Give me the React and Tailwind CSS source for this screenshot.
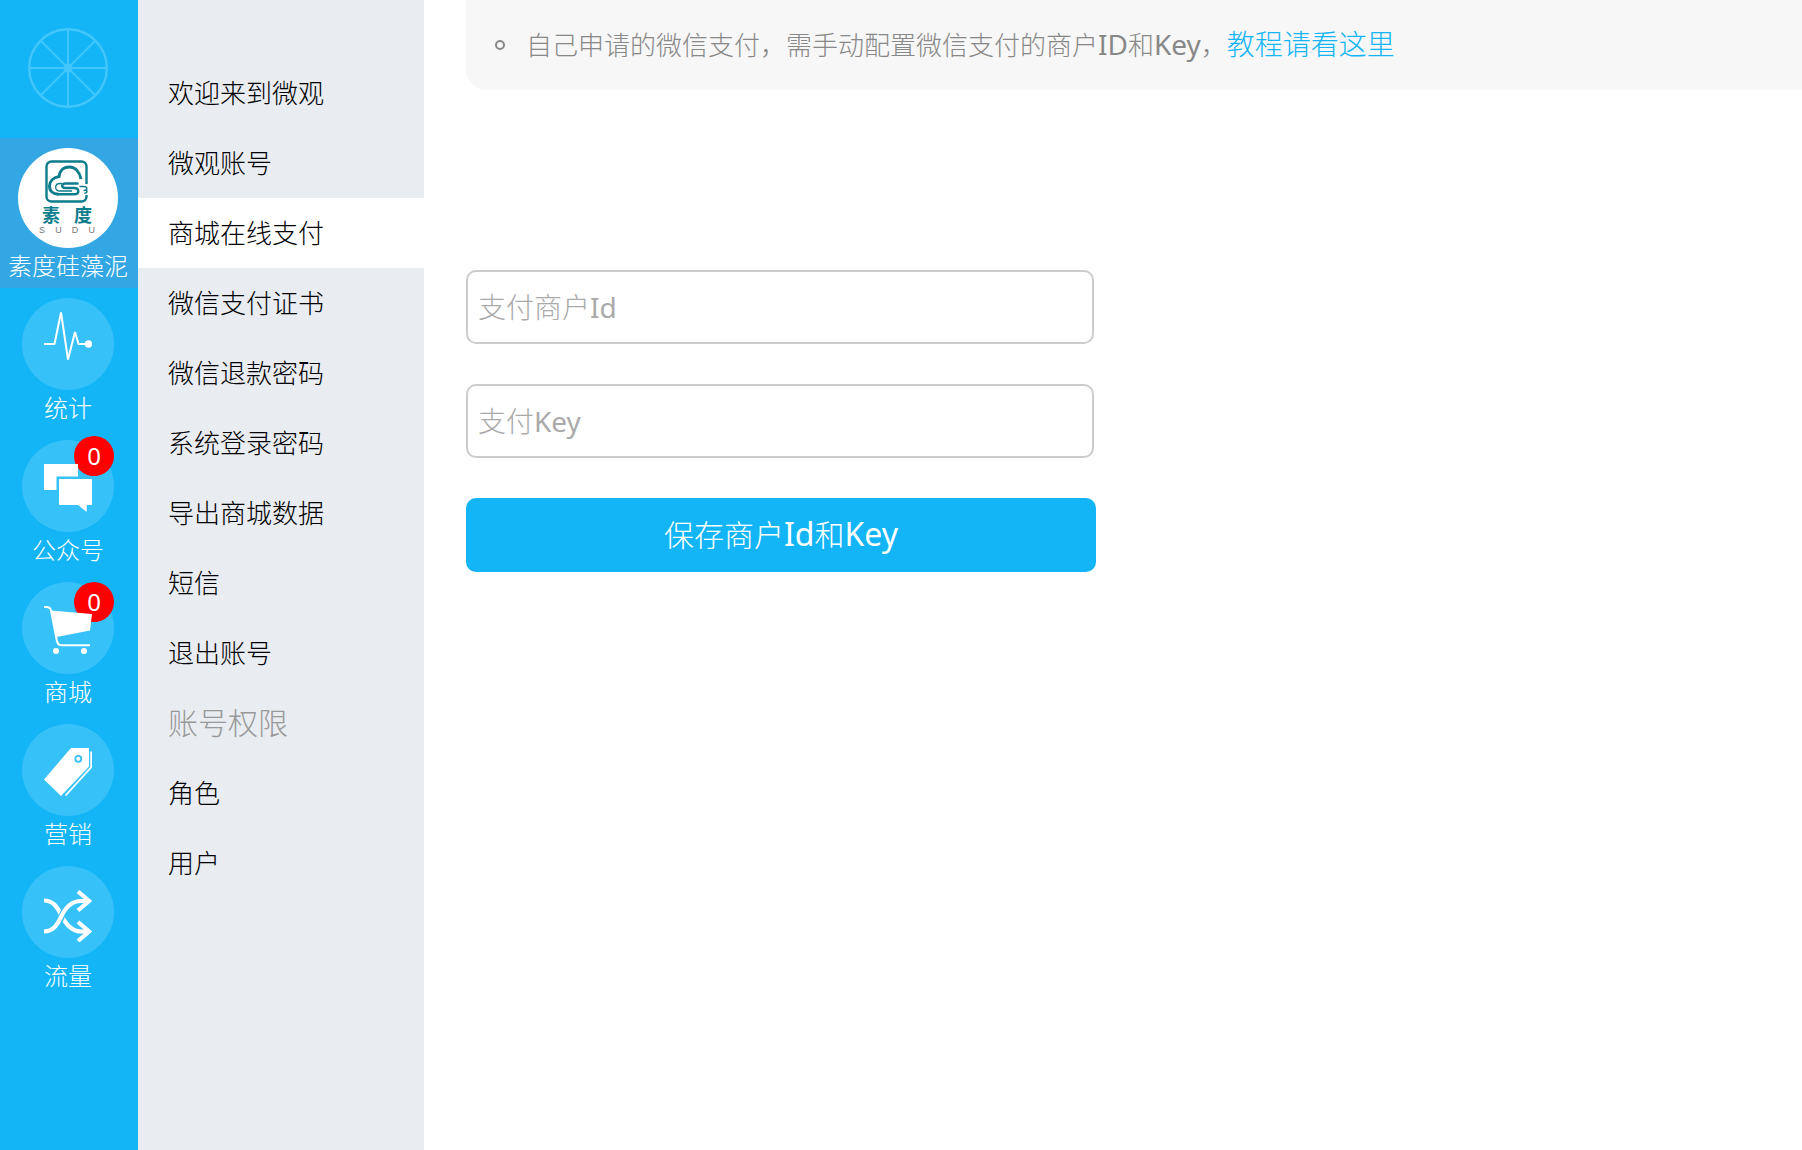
const menu = [
  { label: "欢迎来到微观" },
  { label: "微观账号" },
  { label: "商城在线支付", active: true },
  { label: "微信支付证书" },
  { label: "微信退款密码" },
  { label: "系统登录密码" },
  { label: "导出商城数据" },
  { label: "短信" },
  { label: "退出账号" },
  { label: "账号权限", heading: true },
  { label: "角色" },
  { label: "用户" },
];

function WheelLogo() {
  return (
    <svg viewBox="0 0 80 80" className="size-20" fill="none" stroke="#43c6f9" aria-hidden="true">
      <circle cx="40" cy="40" r="38.8" strokeWidth="2.4" />
      <path d="M40 1v78M1 40h78M12.4 12.4l55.2 55.2M67.6 12.4L12.4 67.6" strokeWidth="2" />
      <circle cx="40" cy="40" r="4.5" fill="#43c6f9" stroke="none" />
    </svg>
  );
}

function BrandAvatar() {
  return (
    <span className="flex size-25 flex-col items-center rounded-full bg-white pt-3 pr-0.5">
      <svg viewBox="0 0 44 44" className="size-11" fill="none" stroke="#0d7c8c" aria-hidden="true">
        <path d="M41.500 24V6.500a5 5 0 0 0-5-5H6.500a5 5 0 0 0-5 5v30a5 5 0 0 0 5 5h30a5 5 0 0 0 5-5V35" strokeWidth="2.400" />
        <path d="M36 19C34.500 11.500 30 7 24.500 7 18 7 14.500 11.500 14 16.500 8 17.500 4.500 21.500 4.500 26c0 5 3.500 8.300 9 8.300" strokeWidth="3" />
        <path d="M33.500 23.500H20.500c-2.300 0-3.300.9-3.300 2.300s1 2.200 3.300 2.200h8.500c2.800 0 4.300 1.200 4.300 3.200s-1.500 3.100-4.300 3.100H12" strokeWidth="2.400" />
        <path d="M17 23.500h-2c-2.600 0-4.300 1.500-4.300 3.700s1.700 3.800 4.300 3.800h12" strokeWidth="1.300" />
        <path d="M34.500 26.500h4c2.200 0 3.300.7 3.300 2s-1.100 2-3.300 2M41 30c1.400.5 1.600 3-1.600 3.200" strokeWidth="1.500" />
      </svg>
      <span className="flex gap-3.5 text-[18px] leading-[22px] font-bold text-[#0d7c8c]">
        <span>素</span>
        <span>度</span>
      </span>
      <span className="flex w-14 justify-between font-['Liberation_Sans',sans-serif] text-[9px] leading-[8px] font-normal text-[#777]">
        <span>S</span>
        <span>U</span>
        <span>D</span>
        <span>U</span>
      </span>
    </span>
  );
}

function PulseIcon() {
  return (
    <svg viewBox="0 0 48 48" className="size-12" fill="none" stroke="#fff" strokeWidth="2" aria-hidden="true">
      <path d="M0 32h10.500L17 .5 24 47.500l7-27.500L34.500 32H42" strokeLinejoin="bevel" />
      <circle cx="44.500" cy="32" r="3.700" fill="#fff" stroke="none" />
    </svg>
  );
}

function ChatIcon() {
  return (
    <svg viewBox="0 0 48 48" className="size-12" fill="#fff" aria-hidden="true">
      <path d="M0 0h34v12.500H12.500V26H0z" />
      <path d="M15 15h33v26h-5.300v7L34 41H15z" />
    </svg>
  );
}

function CartIcon() {
  return (
    <svg viewBox="0 0 48 48" className="size-12" fill="#fff" aria-hidden="true">
      <path d="M0 1h2.500c2.500 0 4 1.200 4.500 3.500l5.500 28.500c.6 4 1.500 6.200 4.500 6.200H46" fill="none" stroke="#fff" strokeWidth="2" />
      <path d="M7 4.500L48 8l-2 16.500L12.500 31z" />
      <circle cx="12" cy="45" r="3.100" />
      <circle cx="40" cy="45" r="3.100" />
    </svg>
  );
}

function TagIcon() {
  return (
    <svg viewBox="0 0 48 48" className="size-12" aria-hidden="true">
      <path d="M27 0h18v18.500L17 48 0 31.500z" fill="#fff" />
      <circle cx="34.300" cy="10.800" r="3" fill="#fff" stroke="#37c1f9" strokeWidth="1.800" />
      <path d="M47.100 3.500v15.800L21.500 47.500" fill="none" stroke="#fff" strokeWidth="1.800" />
    </svg>
  );
}

function ShuffleIcon() {
  return (
    <svg viewBox="0 0 48 52" className="h-[52px] w-12" fill="none" aria-hidden="true">
      <g stroke="#fff" strokeWidth="4.200">
        <path d="M0 10.500c9 0 13 6 17.500 15S28 41.500 37 41.500h8" />
        <path d="M34 32l11 9.500L34 51" />
        <path d="M34 1.500L45 11l-11 9.500" />
      </g>
      <path d="M12 37c2.500-3 4.200-7 6-11.500 1.700-4 3.500-8 6-11" stroke="#37c1f9" strokeWidth="6.500" />
      <path d="M0 41.500c9 0 13-6 17.500-15.500S28 11 37 11h8" stroke="#fff" strokeWidth="4.200" />
    </svg>
  );
}

const sections = [
  { label: "统计", Icon: PulseIcon, iconPad: "pt-3.5" },
  { label: "公众号", Icon: ChatIcon, iconPad: "pt-6", badge: "-top-1" },
  { label: "商城", Icon: CartIcon, iconPad: "pt-6", badge: "top-0" },
  { label: "营销", Icon: TagIcon, iconPad: "pt-6" },
  { label: "流量", Icon: ShuffleIcon, iconPad: "pt-6" },
];

const fieldClass =
  "mr-0.5 h-[74px] rounded-[10px] border-2 border-[#ccc] px-2.5 font-['Noto_Sans','Noto_Sans_CJK_SC_Light','Noto_Sans_CJK_SC',sans-serif] text-[28px] font-normal placeholder:text-[#aaa]";

export default function App() {
  return (
    <div className="flex min-h-screen bg-white font-['Noto_Sans','Noto_Sans_CJK_SC',sans-serif] font-light text-black">
      <nav aria-label="主导航" className="w-[138px] shrink-0 bg-[#13b5f7] text-[24px] leading-9 text-white">
        <div className="flex h-[138px] justify-center pt-7 pr-0.5">
          <WheelLogo />
        </div>
        <a href="#account" className="flex h-[150px] flex-col items-center bg-[#33a7e3] pt-2.5 pr-0.5">
          <BrandAvatar />
          <span className="whitespace-nowrap">素度硅藻泥</span>
        </a>
        <ul className="flex flex-col gap-3.5 pt-2.5 pr-0.5">
          {sections.map(({ label, Icon, iconPad, badge }) => (
            <li key={label}>
              <a href={"#" + label} className="flex flex-col items-center">
                <span className={"relative flex size-23 justify-center rounded-full bg-[#37c1f9] " + iconPad}>
                  {badge && (
                    <span
                      className={
                        "absolute right-0 flex size-10 items-center justify-center rounded-full bg-[#ff0000] font-normal " + badge
                      }
                    >
                      0
                    </span>
                  )}
                  <span className="relative">
                    <Icon />
                  </span>
                </span>
                <span>{label}</span>
              </a>
            </li>
          ))}
        </ul>
      </nav>

      <nav aria-label="设置" className="w-[286px] shrink-0 bg-[#e9ecf1] pt-[58px] text-[26px] leading-[70px]">
        <ul>
          {menu.map(({ label, active, heading }) => (
            <li key={label}>
              {heading ? (
                <h2 className="px-[30px] text-[30px] leading-[70px] text-[#999]">{label}</h2>
              ) : (
                <a href={"#" + label} className={active ? "block bg-white px-[30px]" : "block px-[30px]"}>
                  {label}
                </a>
              )}
            </li>
          ))}
        </ul>
      </nav>

      <main className="min-w-0 flex-1 pl-[42px]">
        <ul className="rounded-bl-[20px] bg-[#f7f7f7] py-5 pr-5 pl-[29px] text-[26px] leading-[50px] text-[#888]">
          <li className="flex items-center gap-[21px]">
            <span className="size-2.5 shrink-0 rounded-full border-2 border-[#888]" />
            <p>
              自己申请的微信支付，需手动配置微信支付的商户
              <span className="text-[28px] leading-none font-normal">ID</span>和
              <span className="text-[28px] leading-none font-normal">Key</span>，
              <a href="#guide" className="text-[28px] leading-none text-[#13b5f7]">教程请看这里</a>
            </p>
          </li>
        </ul>
        <form className="mt-45 flex max-w-[630px] flex-col gap-10" onSubmit={(e) => e.preventDefault()}>
          <input type="text" aria-label="支付商户Id" placeholder="支付商户Id" className={fieldClass} />
          <input type="text" aria-label="支付Key" placeholder="支付Key" className={fieldClass} />
          <button type="submit" className="h-[74px] rounded-[10px] bg-[#13b5f7] pb-0.5 text-[30px] text-white">
            保存商户<span className="text-[32px] leading-none font-normal">Id</span>和
            <span className="text-[32px] leading-none font-normal">Key</span>
          </button>
        </form>
      </main>
    </div>
  );
}
